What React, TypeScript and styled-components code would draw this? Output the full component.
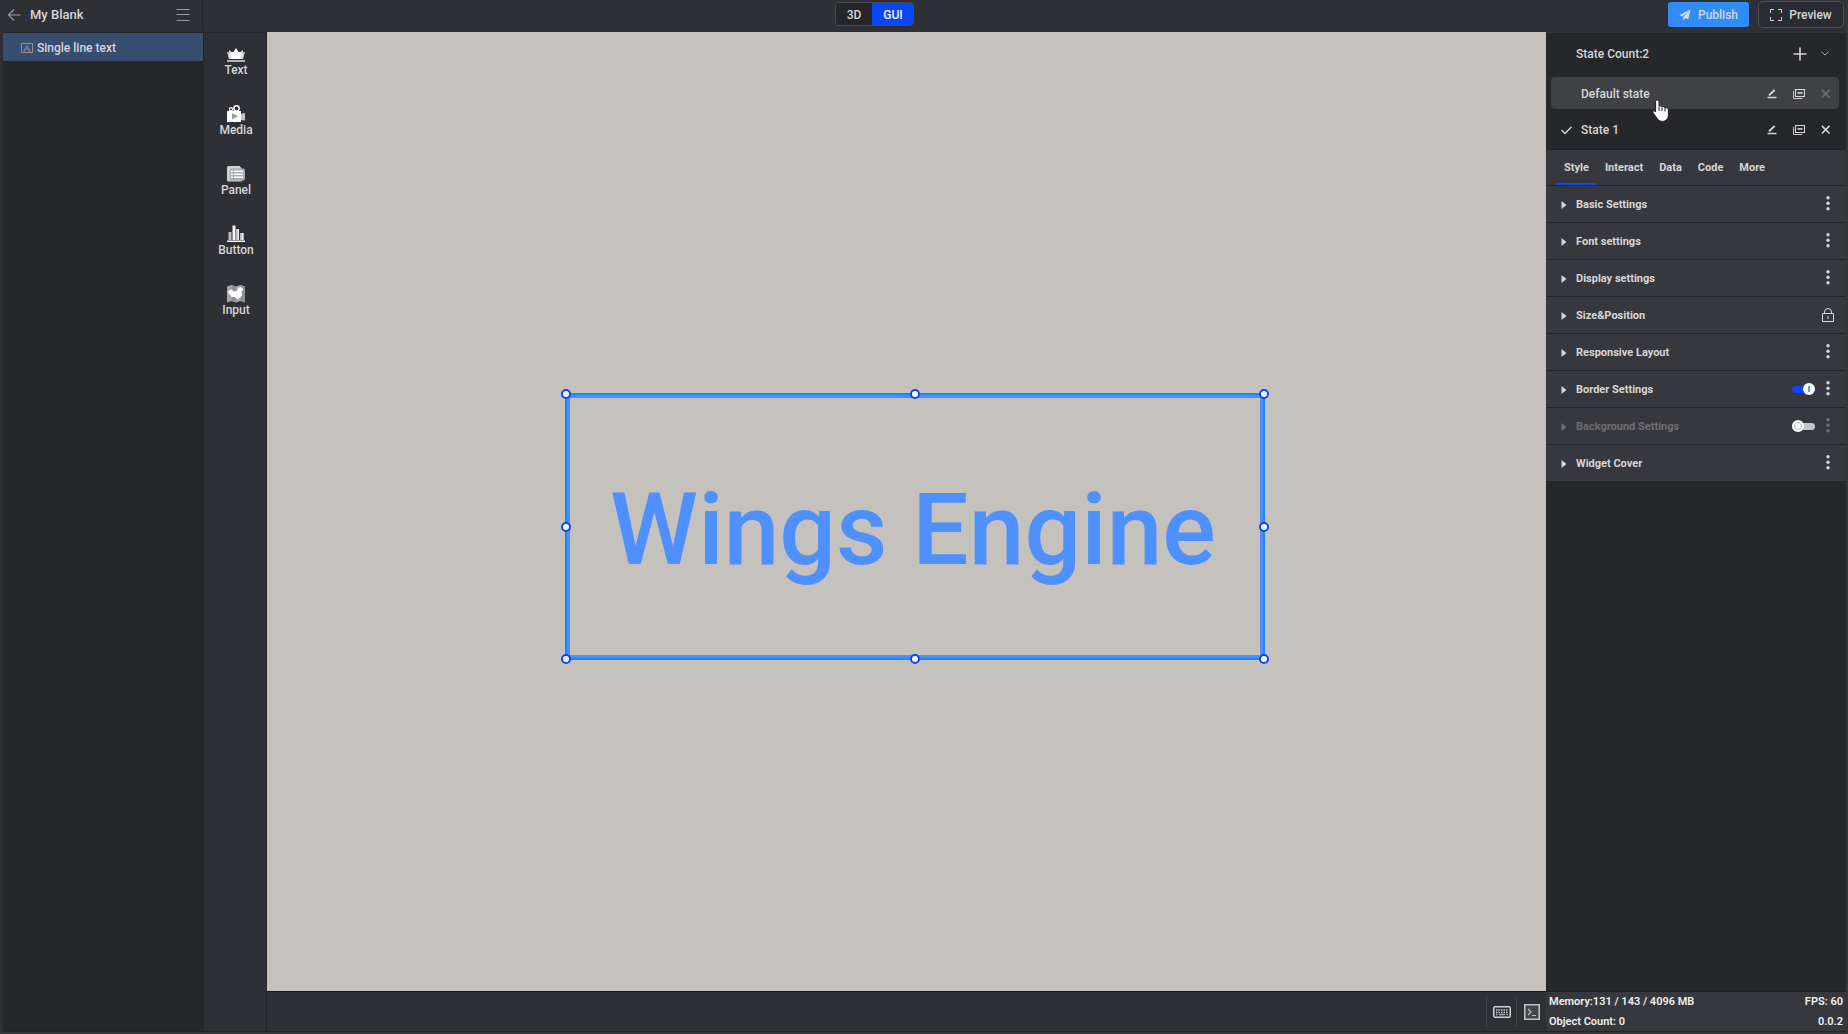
import React, { useState } from 'react';
import styled, { createGlobalStyle } from 'styled-components';

const c = {
  bar: '#2f3035',
  tree: '#252728',
  panel: '#26272b',
  section: '#37383d',
  line: '#232427',
  text: '#d6d6d7',
  blue: '#0b48f5',
  canvas: '#c5c1bc',
};

const Global = createGlobalStyle`
  * { box-sizing: border-box; }
  body {
    margin: 0;
    background: ${c.tree};
    color: ${c.text};
    font: 500 12px/16px Roboto, "Liberation Sans", sans-serif;
  }
  button {
    margin: 0;
    padding: 0;
    border: 0;
    background: none;
    color: inherit;
    font: inherit;
    cursor: pointer;
  }
  svg { display: block; flex: none; }
`;

const Shell = styled.div`
  display: flex;
  flex-direction: column;
  height: 100vh;
  min-height: 600px;
  overflow: hidden;
  padding: 0 2px 2px 3px;
  background: #353637;
`;

const TopBar = styled.header`
  display: grid;
  grid-template-columns: 200px 1fr auto 1fr 300px;
  flex: none;
  height: 32px;
  margin-left: -3px;
  padding-left: 3px;
  background: ${c.bar};
`;

const ProjectBar = styled.div`
  display: flex;
  align-items: center;
  gap: 8px;
  height: 31px;
  padding: 0 11px 2px 3px;
  border-right: 1px solid #242528;
`;

const ProjectName = styled.h1`
  flex: 1;
  margin: 0;
  font-size: 13px;
  font-weight: 500;
  line-height: 16px;
`;

const IconButton = styled.button<{ $dim?: boolean }>`
  display: flex;
  align-items: center;
  justify-content: center;
  flex: none;
  width: 16px;
  height: 16px;
  color: ${(p) => (p.$dim ? '#6b6c70' : c.text)};
`;

const ModeSwitch = styled.div`
  display: flex;
  grid-column: 3;
  height: 24px;
  margin-top: 2px;
  border: 1px solid #4a4b50;
  border-radius: 4px;
  overflow: hidden;
`;

const ModeButton = styled.button<{ $active: boolean }>`
  width: ${(p) => (p.$active ? 42 : 36)}px;
  margin: ${(p) => (p.$active ? '-1px -1px -1px 0' : '0')};
  padding-top: 1px;
  background: ${(p) => (p.$active ? c.blue : '#25262a')};
  color: ${(p) => (p.$active ? '#f0f2ff' : c.text)};
`;

const Actions = styled.div`
  display: flex;
  grid-column: 5;
  justify-content: flex-end;
  align-items: center;
  gap: 9px;
  height: 29px;
  padding-right: 2px;
`;

const ActionButton = styled.button<{ $primary?: boolean }>`
  display: flex;
  align-items: center;
  justify-content: center;
  gap: 7px;
  width: ${(p) => (p.$primary ? 81 : 86)}px;
  height: ${(p) => (p.$primary ? 25 : 27)}px;
  padding-top: 1px;
  border: ${(p) => (p.$primary ? '0' : '1px solid #505156')};
  border-radius: ${(p) => (p.$primary ? 3 : 5)}px;
  background: ${(p) => (p.$primary ? '#318cfa' : '#2b2c31')};
`;

const Body = styled.div`
  display: grid;
  grid-template-columns: 201px 63px minmax(0, 1fr) 300px;
  flex: 1;
  min-height: 0;
  margin-left: -3px;
  border-left: 3px solid ${c.bar};
`;

const Tree = styled.nav`
  background: ${c.tree};
  border-top: 1px solid ${c.line};
  border-bottom: 1px solid #222325;
`;

const TreeItem = styled.button`
  display: flex;
  align-items: center;
  gap: 4px;
  width: 200px;
  height: 28px;
  padding: 2px 0 0 18px;
  background: #384e70;
`;

const Rail = styled.nav`
  display: flex;
  flex-direction: column;
  padding: 12px 0 0 2px;
  background: ${c.bar};
  border: solid ${c.line};
  border-width: 1px 1px 1px 0;
`;

const RailButton = styled.button`
  display: flex;
  flex-direction: column;
  align-items: center;
  height: 60px;
  line-height: 14px;
`;

const Center = styled.main`
  display: flex;
  flex-direction: column;
  min-width: 0;
`;

const Stage = styled.section`
  position: relative;
  flex: 1;
  overflow: hidden;
  background: ${c.canvas};
`;

const Widget = styled.div`
  position: absolute;
  left: 298px;
  top: 361px;
  display: flex;
  align-items: center;
  justify-content: center;
  width: 700px;
  height: 267px;
  padding: 6px 4px 0 0;
  border: 1px solid #1c86fc;
  box-shadow: inset 0 0 0 1px #1c86fc, inset 0 0 0 4px #4e8ffb;
  color: #4e90fd;
  font-size: 100px;
  line-height: 120px;
  white-space: nowrap;
`;

const Handle = styled.span<{ $x: number; $y: number }>`
  position: absolute;
  left: ${(p) => p.$x}%;
  top: ${(p) => p.$y}%;
  width: 10px;
  height: 10px;
  margin: -5px;
  border: 2px solid #0b46f0;
  border-radius: 50%;
  background: #fff;
`;

const BottomBar = styled.footer`
  display: flex;
  align-items: center;
  justify-content: flex-end;
  flex: none;
  height: 41px;
  background: ${c.bar};
  border-top: 1px solid #17181a;
  border-bottom: 1px solid #222325;
`;

const BottomButton = styled.button`
  display: flex;
  align-items: center;
  justify-content: center;
  width: 30px;
  height: 30px;
  border-left: 1px solid #434448;
`;

const Side = styled.aside`
  display: flex;
  flex-direction: column;
  min-height: 0;
  background: ${c.tree};
  border-top: 1px solid #35363a;
`;

const States = styled.section`
  flex: none;
  background: ${c.panel};
  border-bottom: 1px solid #1f2023;
`;

const StatesHeader = styled.div`
  display: flex;
  align-items: center;
  gap: 9px;
  height: 40px;
  padding: 2px 13px 0 30px;
  border-bottom: 1px solid #232428;
`;

const Grow = styled.span`
  flex: 1;
`;

const StateList = styled.ul`
  display: flex;
  flex-direction: column;
  gap: 4px;
  margin: 0;
  padding: 4px 7px 4px 5px;
  list-style: none;
`;

const StateRow = styled.li<{ $hover?: boolean }>`
  position: relative;
  display: flex;
  align-items: center;
  gap: 11px;
  height: 32px;
  padding: 2px 5px 0;
  border-radius: 4px;
  background: ${(p) => (p.$hover ? '#404145' : 'transparent')};
`;

const StateName = styled.button`
  display: grid;
  grid-template-columns: 20px 1fr;
  align-items: center;
  flex: 1;
  padding-left: 5px;
  text-align: left;
`;

const Pointer = styled.svg`
  position: absolute;
  left: 101px;
  top: 22px;
  pointer-events: none;
`;

const Tabs = styled.div`
  display: flex;
  flex: none;
  height: 36px;
  padding-left: 10px;
  background: ${c.section};
  border-bottom: 1px solid ${c.line};
  font-size: 11px;
`;

const Tab = styled.button<{ $active: boolean }>`
  padding: 3px 8px 0;
  border-bottom: 2px solid ${(p) => (p.$active ? c.blue : 'transparent')};
  font-weight: 700;
`;

const SettingRow = styled.div<{ $off?: boolean; $last?: boolean }>`
  display: flex;
  align-items: center;
  flex: none;
  gap: 5px;
  height: ${(p) => (p.$last ? 36 : 37)}px;
  padding-right: 10px;
  background: ${c.section};
  border-bottom: ${(p) => (p.$last ? '0' : `1px solid ${c.line}`)};
  color: ${(p) => (p.$off ? '#6d6e72' : c.text)};
  font-size: 11px;
  font-weight: 700;

  ${IconButton} {
    color: inherit;
  }
`;

const Disclosure = styled.button`
  display: flex;
  align-items: center;
  flex: 1;
  gap: 9px;
  padding: 1px 0 0 15px;
  text-align: left;
`;

const Switch = styled.label<{ $on: boolean }>`
  display: flex;
  align-items: center;
  justify-content: ${(p) => (p.$on ? 'flex-end' : 'flex-start')};
  width: 23px;
  height: 7px;
  border-radius: 4px;
  background: ${(p) => (p.$on ? c.blue : '#bcc7cb')};
  cursor: pointer;

  input {
    appearance: none;
    display: grid;
    place-items: center;
    width: 12px;
    height: 12px;
    margin: 0;
    border-radius: 50%;
    background: #fff;
  }

  input::before {
    content: '';
    width: ${(p) => (p.$on ? 2 : 6)}px;
    height: 6px;
    border: ${(p) => (p.$on ? '0' : '1px solid #b9c0c4')};
    border-radius: ${(p) => (p.$on ? '0' : '50%')};
    background: ${(p) => (p.$on ? '#7298e8' : 'transparent')};
  }
`;

const Stats = styled.dl`
  display: grid;
  grid-template: 19px 22px / 1fr auto;
  flex: none;
  align-items: center;
  height: 41px;
  margin: auto 0 0;
  padding: 0 3px;
  background: ${c.section};
  border-top: 1px solid #1f2023;
  border-bottom: 1px solid #222325;
  color: #f0f0f1;
  font-size: 11px;
  font-weight: 600;

  div { display: flex; }
  dt, dd { margin: 0; white-space: pre; text-align: right; }
`;

const ArrowIcon = () => (
  <svg width="14" height="14" viewBox="0 0 14 14" fill="none" stroke="#98999c" strokeWidth="1.2">
    <path d="M13.5 7H1.5M7 1.5L1.5 7L7 12.5" />
  </svg>
);
const MenuIcon = () => (
  <svg width="14" height="14" viewBox="0 0 14 14" fill="none" stroke="#98999c">
    <path d="M0.5 1.5H13.5M0.5 6.5H13.5M0.5 12.5H13.5" />
  </svg>
);
const LabelIcon = () => (
  <svg width="12" height="10" viewBox="0 0 12 10" fill="none" stroke="#8f9094">
    <path d="M0.5 0.5H11.5V9.5H0.5ZM3 8L6 2.5L9 8M4 6H8M2.5 8H4.5M7.5 8H9.5" />
  </svg>
);
const SendIcon = () => (
  <svg width="12" height="12" viewBox="0 0 12 12" fill="#d4dcec">
    <path d="M11.7 0.3L0.3 6.2L3.2 7.5L9.3 2.8L4.2 8.1V11.5L6.1 8.9L9.2 10.2Z" />
  </svg>
);
const FrameIcon = () => (
  <svg width="12" height="12" viewBox="0 0 12 12" fill="none" stroke={c.text}>
    <path d="M0.5 4V0.5H4M8 0.5H11.5V4M11.5 8V11.5H8M4 11.5H0.5V8" />
  </svg>
);
const CrownIcon = () => (
  <svg width="18" height="18" viewBox="0 0 18 18">
    <path d="M0 6.5L5 9L4 14H1.8ZM18 6.5L13 9L14 14H16.2Z" fill="#c6c7ca" />
    <path d="M2 5L6 8L5 14H2.5ZM16 5L12 8L13 14H15.5Z" fill="#dedfe0" />
    <path d="M9 3L11.2 6.5L14 8.3L13.5 14H4.5L4 8.3L6.8 6.5Z" fill="#fff" />
    <path d="M0 15H18V17H0Z" fill="#b3b4b7" />
  </svg>
);
const MediaIcon = () => (
  <svg width="18" height="18" viewBox="0 0 18 18">
    <path d="M13 9L18 8V15.5L13 15Z" fill="#c4c5c8" />
    <circle cx="9.5" cy="3.4" r="2.6" fill="none" stroke="#fff" strokeWidth="1.5" />
    <circle cx="4" cy="4.2" r="1.6" fill="none" stroke="#fff" strokeWidth="1.2" />
    <path d="M0 6H14V17H0Z" fill="#fff" />
    <path d="M5 8L11 11.3L5 14.5Z" fill="#9b9da1" />
  </svg>
);
const PanelIcon = () => (
  <svg width="18" height="18" viewBox="0 0 18 18">
    <path d="M1.5 1H12.5L14.5 3V16.5H1.5Q0 16.5 0 15V2.5Q0 1 1.5 1Z" fill="#d2d3d6" />
    <path d="M3.5 3.5H16.5L18 5V14L16.5 15.5H3.5L2.5 14V5Z" fill="#a9abb0" />
    <path d="M4 5.5H6V7H4ZM4 8.5H6V10H4ZM4 11.5H6V13H4ZM7 5.5H16V7H7ZM7 8.5H16V10H7ZM7 11.5H16V13H7Z" fill="#fff" />
  </svg>
);
const BarsIcon = () => (
  <svg width="18" height="18" viewBox="0 0 18 18">
    <path d="M1.5 7H4.5V15H1.5ZM9 4H12V15H9ZM13 8H16.5V15H13Z" fill="#bebfc2" />
    <path d="M5.5 0.5H8.5V15H5.5ZM11 4H12V15H11ZM15 8H16.5V15H15Z" fill="#f4f4f5" />
    <path d="M0 15.5H18V17H0Z" fill="#fff" />
  </svg>
);
const MapIcon = () => (
  <svg width="18" height="18" viewBox="0 0 18 18">
    <path d="M0 1.5L4.5 0L9 1.5L13.5 0L18 1.5V17.5L13.5 16L9 17.5L4.5 16L0 17.5Z" fill="#a5a7aa" />
    <path d="M4.5 0L9 1.5V17.5L4.5 16ZM13.5 0L18 1.5V17.5L13.5 16Z" fill="#8d8f93" />
    <path d="M1.5 5.5L5 4.5L6.5 6.5L10 6L11.5 2.5L14 2L16.5 4.5L14.5 6.5L15 10L13 13L10 14L7.5 12L4.5 12L3 9.5L1 8Z" fill="#fff" />
  </svg>
);
const KeyboardIcon = () => (
  <svg width="18" height="12" viewBox="0 0 18 12" fill="none" stroke="#d0d1d3">
    <rect x="0.75" y="0.75" width="16.5" height="10.5" rx="1.5" strokeWidth="1.5" />
    <path d="M3 4H15M3 6.5H15" strokeWidth="1.5" strokeDasharray="1.5 1" />
    <path d="M3 8.7H4.5M6 8.7H12M13.5 8.7H15" />
  </svg>
);
const TerminalIcon = () => (
  <svg width="16" height="16" viewBox="0 0 16 16" fill="none" stroke="#bfc0c2">
    <rect x="0.75" y="0.75" width="14.5" height="14.5" fill="#45464a" strokeWidth="1.5" />
    <path d="M4 5L7 8L4 11M8 11.5H12" strokeWidth="1.2" />
  </svg>
);
const PlusIcon = () => (
  <svg width="14" height="14" viewBox="0 0 14 14" stroke={c.text} strokeWidth="1.6">
    <path d="M0.5 7H13.5M7 0.5V13.5" />
  </svg>
);
const ChevronIcon = () => (
  <svg width="8" height="5" viewBox="0 0 8 5" fill="none" stroke="#a5a6a9">
    <path d="M0.5 0.7L4 4L7.5 0.7" />
  </svg>
);
const CheckIcon = () => (
  <svg width="11" height="9" viewBox="0 0 11 9" fill="none" stroke={c.text} strokeWidth="1.3">
    <path d="M0.5 4L4 7.5L10.5 0.7" />
  </svg>
);
const EditIcon = () => (
  <svg width="10" height="10" viewBox="0 0 10 10" stroke="currentColor">
    <path d="M2 6.4L7.6 1" strokeWidth="2" />
    <path d="M0.5 8.5H9.5" strokeWidth="1.5" />
  </svg>
);
const CopyIcon = () => (
  <svg width="12" height="10" viewBox="0 0 12 10" fill="none" stroke="currentColor">
    <path d="M2.5 0.5H11.5V7.5H2.5Z" strokeWidth="1.1" />
    <path d="M0.5 2V9.5H9.5" strokeWidth="0.9" />
    <path d="M4.5 3.9H9.5" strokeWidth="1.6" />
  </svg>
);
const CloseIcon = () => (
  <svg width="10" height="10" viewBox="0 0 10 10" stroke="currentColor" strokeWidth="1.6">
    <path d="M0.9 0.9L8.5 8.5M8.5 0.9L0.9 8.5" />
  </svg>
);
const CaretIcon = () => (
  <svg width="6" height="8" viewBox="0 0 6 8" fill="currentColor">
    <path d="M0.5 0L5.5 4L0.5 8Z" />
  </svg>
);
const DotsIcon = () => (
  <svg width="4" height="16" viewBox="0 0 4 16" fill="currentColor">
    <circle cx="2" cy="1.8" r="1.7" />
    <circle cx="2" cy="7.3" r="1.7" />
    <circle cx="2" cy="12.8" r="1.7" />
  </svg>
);
const LockIcon = () => (
  <svg width="12" height="14" viewBox="0 0 12 14" fill="none" stroke="currentColor">
    <path d="M0.5 5.5H11.5V13.5H0.5ZM2.5 5.5V4Q2.5 0.5 6 0.5T9.5 4V5.5M6 8V11" />
  </svg>
);

const tools = [
  { name: 'Text', Icon: CrownIcon },
  { name: 'Media', Icon: MediaIcon },
  { name: 'Panel', Icon: PanelIcon },
  { name: 'Button', Icon: BarsIcon },
  { name: 'Input', Icon: MapIcon },
];

const tabs = ['Style', 'Interact', 'Data', 'Code', 'More'];

const handles = [
  [0, 0], [50, 0], [100, 0], [0, 50], [100, 50], [0, 100], [50, 100], [100, 100],
];

type Setting = { name: string; lock?: boolean; toggle?: boolean };
const settings: Setting[] = [
  { name: 'Basic Settings' },
  { name: 'Font settings' },
  { name: 'Display settings' },
  { name: 'Size&Position', lock: true },
  { name: 'Responsive Layout' },
  { name: 'Border Settings', toggle: true },
  { name: 'Background Settings', toggle: false },
  { name: 'Widget Cover' },
];

function SettingItem({ item, last }: { item: Setting; last: boolean }) {
  const [on, setOn] = useState(item.toggle);
  return (
    <SettingRow $off={on === false} $last={last}>
      <Disclosure aria-expanded={false}>
        <CaretIcon />
        {item.name}
      </Disclosure>
      {on !== undefined && (
        <Switch $on={on}>
          <input type="checkbox" aria-label={item.name} checked={on} onChange={() => setOn(!on)} />
        </Switch>
      )}
      <IconButton aria-label={item.lock ? 'Lock' : 'Options'}>
        {item.lock ? <LockIcon /> : <DotsIcon />}
      </IconButton>
    </SettingRow>
  );
}

function StateItem({ name, current, hover }: { name: string; current?: boolean; hover?: boolean }) {
  return (
    <StateRow $hover={hover}>
      <StateName>
        <span>{current && <CheckIcon />}</span>
        {name}
      </StateName>
      <IconButton aria-label="Rename"><EditIcon /></IconButton>
      <IconButton aria-label="Duplicate"><CopyIcon /></IconButton>
      <IconButton aria-label="Delete" $dim={hover}><CloseIcon /></IconButton>
      {hover && (
        <Pointer width="18" height="24" viewBox="0 0 18 24">
          <path
            d="M5.2 1C6.3 1 7 1.8 7 2.8V7.2C8.2 6.5 9.7 6.9 10 8C11 7.3 12.6 7.7 13 9C14.6 8.4 16.4 9.2 16.4 11V15.5C16.4 19.8 13.8 22.4 10.5 22.4C7.6 22.4 6 21 4.8 19L1 13.8C0.2 12.4 1.7 11.2 3 12.2L3.6 12.8V2.8C3.6 1.8 4.2 1 5.2 1Z"
            fill="#fff"
            stroke="#1d1e20"
          />
          <path d="M7 7.5V12M10 8.3V12M13 9.3V12.5" stroke="#1d1e20" />
        </Pointer>
      )}
    </StateRow>
  );
}

export default function App() {
  const [tab, setTab] = useState('Style');
  const [mode, setMode] = useState('GUI');
  return (
    <Shell>
      <Global />
      <TopBar>
        <ProjectBar>
          <IconButton aria-label="Back"><ArrowIcon /></IconButton>
          <ProjectName>My Blank</ProjectName>
          <IconButton aria-label="Menu"><MenuIcon /></IconButton>
        </ProjectBar>
        <ModeSwitch>
          {['3D', 'GUI'].map((m) => (
            <ModeButton key={m} $active={m === mode} onClick={() => setMode(m)}>{m}</ModeButton>
          ))}
        </ModeSwitch>
        <Actions>
          <ActionButton $primary><SendIcon />Publish</ActionButton>
          <ActionButton><FrameIcon />Preview</ActionButton>
        </Actions>
      </TopBar>
      <Body>
        <Tree>
          <TreeItem><LabelIcon />Single line text</TreeItem>
        </Tree>
        <Rail>
          {tools.map(({ name, Icon }) => (
            <RailButton key={name}><Icon />{name}</RailButton>
          ))}
        </Rail>
        <Center>
          <Stage>
            <Widget>
              Wings Engine
              {handles.map(([x, y]) => <Handle key={`${x}-${y}`} $x={x} $y={y} />)}
            </Widget>
          </Stage>
          <BottomBar>
            <BottomButton aria-label="Keyboard"><KeyboardIcon /></BottomButton>
            <BottomButton aria-label="Console"><TerminalIcon /></BottomButton>
          </BottomBar>
        </Center>
        <Side>
          <States>
            <StatesHeader>
              State Count:2
              <Grow />
              <IconButton aria-label="Add state"><PlusIcon /></IconButton>
              <IconButton aria-label="Collapse"><ChevronIcon /></IconButton>
            </StatesHeader>
            <StateList>
              <StateItem name="Default state" hover />
              <StateItem name="State 1" current />
            </StateList>
          </States>
          <Tabs role="tablist">
            {tabs.map((t) => (
              <Tab key={t} role="tab" aria-selected={t === tab} $active={t === tab} onClick={() => setTab(t)}>{t}</Tab>
            ))}
          </Tabs>
          {settings.map((s, i) => (
            <SettingItem key={s.name} item={s} last={i === settings.length - 1} />
          ))}
          <Stats>
            <div><dt>Memory:</dt><dd>131 / 143 / 4096 MB</dd></div>
            <div><dt>FPS: </dt><dd>60</dd></div>
            <div><dt>Object Count: </dt><dd>0</dd></div>
            <dd>0.0.2</dd>
          </Stats>
        </Side>
      </Body>
    </Shell>
  );
}
